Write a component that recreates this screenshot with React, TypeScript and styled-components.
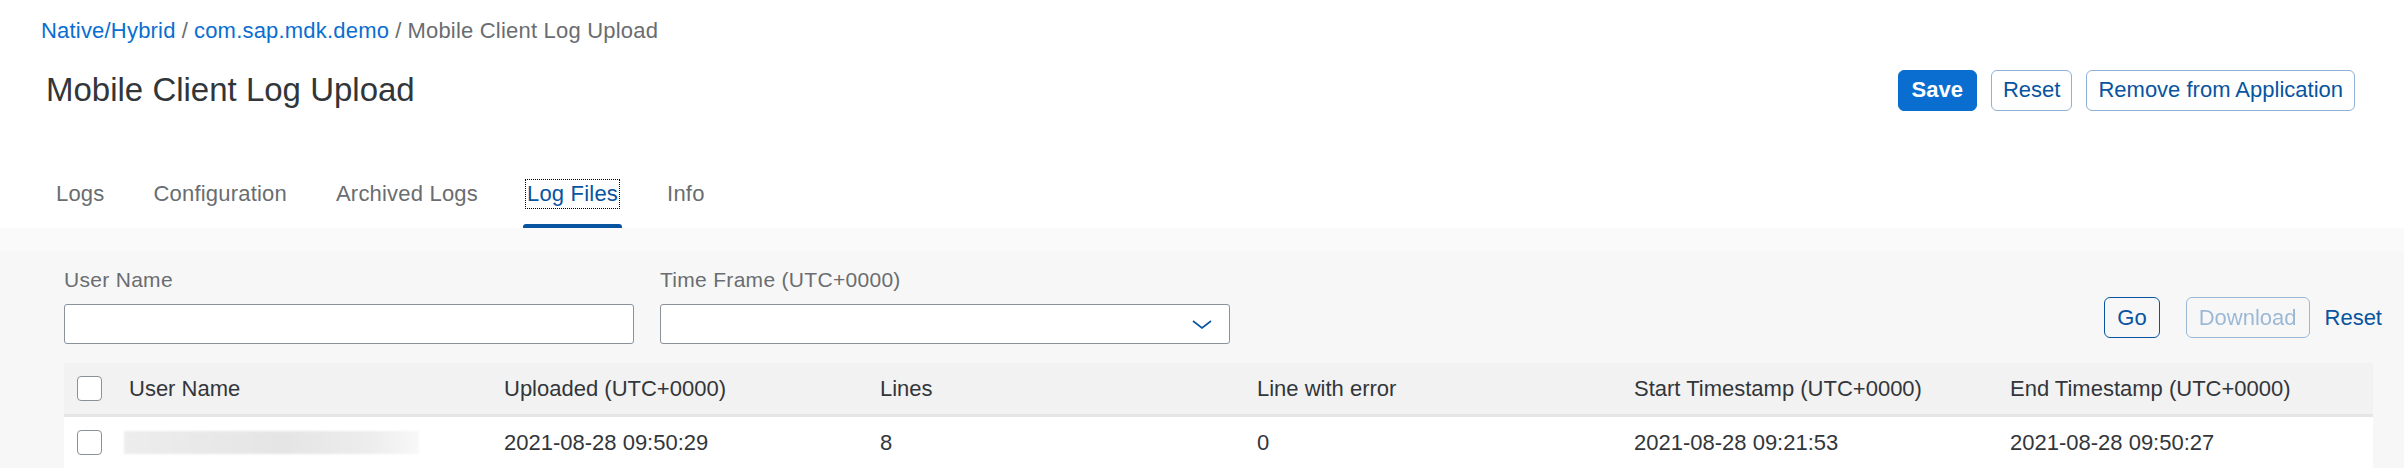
import React from "react";
import styled, { createGlobalStyle } from "styled-components";

const GlobalStyle = createGlobalStyle`
  html, body {
    margin: 0;
    padding: 0;
    background: #ffffff;
    font-family: "Liberation Sans", Arial, sans-serif;
    color: #32363a;
  }
  * { box-sizing: border-box; }
`;

const Page = styled.div`
  display: flex;
  flex-direction: column;
  width: 2404px;
  height: 468px;
  overflow: hidden;
`;

const Header = styled.header`
  padding: 12px 49px 0 41px;
`;

const Breadcrumb = styled.nav`
  font-size: 22px;
  letter-spacing: 0.2px;
  line-height: 38px;
  color: #6a6d70;
  white-space: nowrap;
`;

const Crumb = styled.a`
  color: #0a6ed1;
  text-decoration: none;
`;

const Sep = styled.span`
  color: #6a6d70;
  margin: 0 6px;
`;

const TitleRow = styled.div`
  display: flex;
  align-items: center;
  justify-content: space-between;
  height: 60px;
  margin-top: 10px;
`;

const Title = styled.h1`
  margin: 0 0 0 5px;
  font-size: 33px;
  font-weight: normal;
  color: #32363a;
`;

const Actions = styled.div`
  display: flex;
  gap: 14px;
`;

const HeaderButton = styled.button<{ $emphasized?: boolean }>`
  height: 41px;
  padding: 0 ${(p) => (p.$emphasized ? "13px" : "11px")};
  border-radius: 6px;
  font-family: inherit;
  font-size: 22px;
  cursor: pointer;
  border: 1px solid ${(p) => (p.$emphasized ? "#0a6ed1" : "#8fb0d8")};
  background: ${(p) => (p.$emphasized ? "#0a6ed1" : "#ffffff")};
  color: ${(p) => (p.$emphasized ? "#ffffff" : "#0854a0")};
  font-weight: ${(p) => (p.$emphasized ? "bold" : "normal")};
`;

const TabBar = styled.div`
  display: flex;
  gap: 41px;
  padding: 60px 0 0 52px;
`;

const Tab = styled.div<{ $active?: boolean }>`
  position: relative;
  padding: 0 3px 20px;
  font-size: 22px;
  letter-spacing: 0.2px;
  line-height: 28px;
  color: ${(p) => (p.$active ? "#0854a0" : "#6a6d70")};

  &::after {
    content: "";
    position: absolute;
    left: 0;
    right: 0;
    bottom: 0;
    height: 4px;
    border-radius: 3px 3px 0 0;
    background: ${(p) => (p.$active ? "#0854a0" : "transparent")};
  }
`;

const TabLabel = styled.span<{ $focused?: boolean }>`
  display: inline-block;
  padding: 0 1px;
  outline: ${(p) => (p.$focused ? "1px dotted #000" : "none")};
`;

const Content = styled.main`
  flex: 1;
  background: linear-gradient(#fafafa 0, #fafafa 23px, #f7f7f7 23px);
  padding: 40px 22px 0 64px;
`;

const FilterBar = styled.div`
  display: flex;
  align-items: flex-end;
  gap: 26px;
`;

const Field = styled.div`
  display: flex;
  flex-direction: column;
  width: 570px;
`;

const Label = styled.label`
  font-size: 21px;
  letter-spacing: 0.3px;
  line-height: 24px;
  color: #6a6d70;
  margin-bottom: 12px;
`;

const Input = styled.input`
  height: 40px;
  border: 1px solid #89919a;
  border-radius: 3px;
  background: #ffffff;
  font-family: inherit;
  font-size: 22px;
  padding: 0 12px;
`;

const Select = styled.div`
  display: flex;
  align-items: center;
  justify-content: flex-end;
  height: 40px;
  border: 1px solid #89919a;
  border-radius: 3px;
  background: #ffffff;
  padding-right: 17px;
`;

const FilterActions = styled.div`
  display: flex;
  align-items: center;
  margin-left: auto;
  margin-bottom: 6px;
`;

const GhostButton = styled.button<{ $disabled?: boolean }>`
  height: 41px;
  padding: 0 12px;
  margin-right: 26px;
  border-radius: 6px;
  border: 1px solid #0854a0;
  background: transparent;
  color: #0854a0;
  font-family: inherit;
  font-size: 22px;
  opacity: ${(p) => (p.$disabled ? 0.38 : 1)};
  &:last-of-type {
    margin-right: 15px;
  }
`;

const LinkButton = styled.a`
  font-size: 22px;
  color: #0854a0;
  text-decoration: none;
`;

const Table = styled.div`
  margin: 19px 9px 0 0;
`;

const cols = "65px 375px 376px 377px 377px 376px 1fr";

const HeadRow = styled.div`
  display: grid;
  grid-template-columns: ${cols};
  align-items: center;
  height: 54px;
  background: #f2f2f2;
  border-bottom: 3px solid #e5e5e5;
  font-size: 22px;
  color: #32363a;
`;

const Row = styled.div`
  display: grid;
  grid-template-columns: ${cols};
  align-items: center;
  height: 51px;
  background: #ffffff;
  font-size: 22px;
  color: #32363a;
`;

const CheckCell = styled.div`
  padding-left: 13px;
  display: flex;
  align-items: center;
`;

const Checkbox = styled.span`
  display: inline-block;
  width: 25px;
  height: 25px;
  border: 1px solid #89919a;
  border-radius: 4px;
  background: #ffffff;
`;

const Cell = styled.div`
  white-space: nowrap;
`;

const Redacted = styled.div`
  margin-left: -5px;
  width: 295px;
  height: 23px;
  background: linear-gradient(90deg, #ededed 0%, #e5e5e5 55%, #eeeeee 85%, #f8f8f8 100%);
  filter: blur(1px);
`;

const Chevron = () => (
  <svg width="20" height="9" viewBox="0 0 20 9">
    <polyline points="1,1 10,8 19,1" fill="none" stroke="#0854a0" strokeWidth="1.6" />
  </svg>
);

const headers = [
  "User Name",
  "Uploaded (UTC+0000)",
  "Lines",
  "Line with error",
  "Start Timestamp (UTC+0000)",
  "End Timestamp (UTC+0000)",
];

const tabs = ["Logs", "Configuration", "Archived Logs", "Log Files", "Info"];

export default function App() {
  return (
    <>
      <GlobalStyle />
      <Page>
        <Header>
          <Breadcrumb>
            <Crumb>Native/Hybrid</Crumb>
            <Sep>/</Sep>
            <Crumb>com.sap.mdk.demo</Crumb>
            <Sep>/</Sep>
            <span>Mobile Client Log Upload</span>
          </Breadcrumb>
          <TitleRow>
            <Title>Mobile Client Log Upload</Title>
            <Actions>
              <HeaderButton $emphasized>Save</HeaderButton>
              <HeaderButton>Reset</HeaderButton>
              <HeaderButton>Remove from Application</HeaderButton>
            </Actions>
          </TitleRow>
        </Header>

        <TabBar>
          {tabs.map((t) => (
            <Tab key={t} $active={t === "Log Files"}>
              <TabLabel $focused={t === "Log Files"}>{t}</TabLabel>
            </Tab>
          ))}
        </TabBar>

        <Content>
          <FilterBar>
            <Field>
              <Label>User Name</Label>
              <Input />
            </Field>
            <Field>
              <Label>Time Frame (UTC+0000)</Label>
              <Select>
                <Chevron />
              </Select>
            </Field>
            <FilterActions>
              <GhostButton>Go</GhostButton>
              <GhostButton $disabled>Download</GhostButton>
              <LinkButton>Reset</LinkButton>
            </FilterActions>
          </FilterBar>

          <Table>
            <HeadRow>
              <CheckCell>
                <Checkbox />
              </CheckCell>
              {headers.map((h) => (
                <Cell key={h}>{h}</Cell>
              ))}
            </HeadRow>
            <Row>
              <CheckCell>
                <Checkbox />
              </CheckCell>
              <Cell>
                <Redacted />
              </Cell>
              <Cell>2021-08-28 09:50:29</Cell>
              <Cell>8</Cell>
              <Cell>0</Cell>
              <Cell>2021-08-28 09:21:53</Cell>
              <Cell>2021-08-28 09:50:27</Cell>
            </Row>
          </Table>
        </Content>
      </Page>
    </>
  );
}
